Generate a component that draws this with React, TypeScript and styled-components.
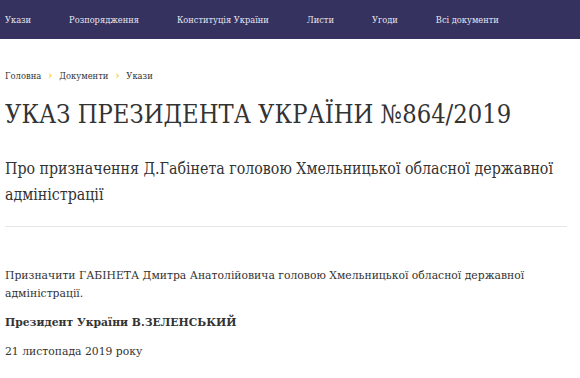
import styled, { createGlobalStyle } from "styled-components";

const GlobalStyle = createGlobalStyle`
	body {
		margin: 0;
		background: #fff;
		font-family: "DejaVu Serif", serif;
		color: #333;
	}
`;

const NavBar = styled.nav`
	height: 39px;
	background: #35325f;
	display: flex;
	align-items: center;
	padding-left: 5px;
`;

const NavLink = styled.a<{ $gap: number }>`
	color: #e6e6ee;
	font-family: "DejaVu Serif Condensed", "DejaVu Serif", serif;
	font-stretch: condensed;
	font-size: 9.2px;
	text-decoration: none;
	margin-right: ${(p) => p.$gap}px;
	white-space: nowrap;
	margin-top: -1px;
`;

const Page = styled.main`
	padding: 0 13px 0 5px;
`;

const Crumbs = styled.div`
	display: flex;
	align-items: center;
	gap: 7px;
	font-family: "DejaVu Serif Condensed", "DejaVu Serif", serif;
	font-stretch: condensed;
	font-size: 9.3px;
	color: #333;
	margin-top: 30px;
`;

const Chevron = styled.span`
	color: #f5d21f;
	font-size: 11px;
	font-weight: bold;
`;

const Title = styled.h1`
	font-family: "DejaVu Serif Condensed", "DejaVu Serif", serif;
	font-stretch: condensed;
	font-size: 25.3px;
	font-weight: normal;
	margin: 16px 0 0;
	line-height: 34px;
`;

const Lead = styled.h2`
	font-family: "DejaVu Serif Condensed", "DejaVu Serif", serif;
	font-stretch: condensed;
	font-size: 15.8px;
	font-weight: normal;
	line-height: 26px;
	margin: 24px 0 0;
	padding-bottom: 18px;
	border-bottom: 1px solid #e6e6e6;
`;

const Para = styled.p<{ $bold?: boolean }>`
	font-size: 10.8px;
	line-height: 18px;
	margin: 0 0 11px;
	font-weight: ${(p) => (p.$bold ? "bold" : "normal")};
`;

const Body = styled.div`
	margin-top: 40px;
`;

const nav = [
	{ label: "Укази", gap: 38 },
	{ label: "Розпорядження", gap: 38 },
	{ label: "Конституція України", gap: 38 },
	{ label: "Листи", gap: 38 },
	{ label: "Угоди", gap: 38 },
	{ label: "Всі документи", gap: 0 },
];

export default function App() {
	return (
		<>
			<GlobalStyle />
			<NavBar>
				{nav.map((n) => (
					<NavLink key={n.label} href="#" $gap={n.gap}>
						{n.label}
					</NavLink>
				))}
			</NavBar>
			<Page>
				<Crumbs>
					<span>Головна</span>
					<Chevron>›</Chevron>
					<span>Документи</span>
					<Chevron>›</Chevron>
					<span>Укази</span>
				</Crumbs>
				<Title>УКАЗ ПРЕЗИДЕНТА УКРАЇНИ №864/2019</Title>
				<Lead>Про призначення Д.Габінета головою Хмельницької обласної державної адміністрації</Lead>
				<Body>
					<Para>Призначити ГАБІНЕТА Дмитра Анатолійовича головою Хмельницької обласної державної адміністрації.</Para>
					<Para $bold>Президент України В.ЗЕЛЕНСЬКИЙ</Para>
					<Para>21 листопада 2019 року</Para>
				</Body>
			</Page>
		</>
	);
}
